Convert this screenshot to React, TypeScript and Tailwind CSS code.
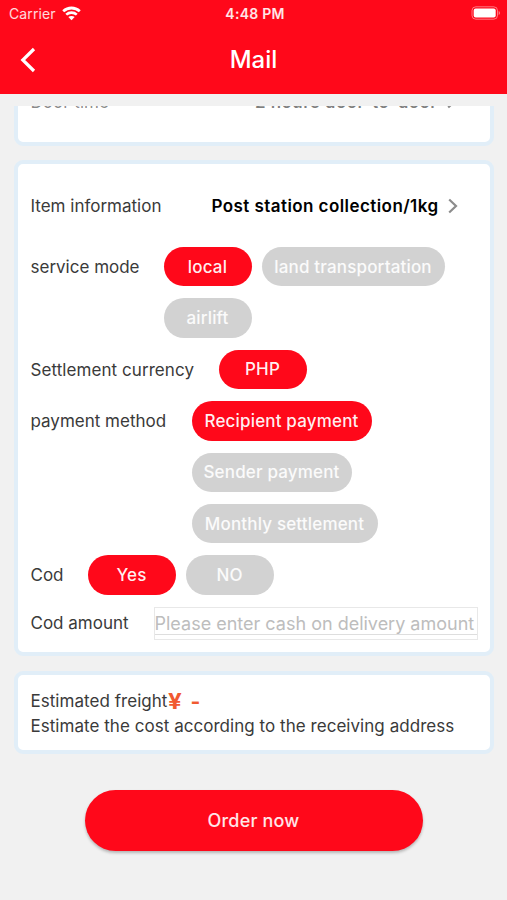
import type { ReactNode } from "react";
import clsx from "clsx";

function StatusBar() {
    return (
        <div className="grid h-[27px] grid-cols-3 items-center pl-[9px] pr-[6px] text-[14px] leading-none">
            <div className="flex items-center gap-[6px]">
                <span className="tracking-[0.1px] text-white/85">Carrier</span>
                <svg width="19" height="15" viewBox="0 0 19 15" fill="none" stroke="white" className="-mt-px">
                    <path d="M1.2 5.2C6 .9 13 .9 17.8 5.2" strokeWidth="2.8" />
                    <path d="M4.2 8.6c3-2.7 7.6-2.7 10.6 0" strokeWidth="2.6" />
                    <path d="M9.5 14.2 6.3 11.1c1.9-1.6 4.5-1.6 6.4 0z" fill="white" stroke="none" />
                </svg>
            </div>
            <span className="text-center font-semibold tracking-[0.25px] text-white/90">4:48 PM</span>
            <div className="-mt-px flex justify-end">
                <svg width="30" height="14" viewBox="0 0 30 14" fill="none">
                    <rect x="1" y="0.8" width="25.5" height="12.4" rx="3.8" stroke="white" strokeOpacity="0.45" />
                    <rect x="2.7" y="2.5" width="22" height="9" rx="2" fill="white" />
                    <path d="M27.7 5v4c1.7-.6 1.7-3.4 0-4z" fill="white" fillOpacity="0.5" />
                </svg>
            </div>
        </div>
    );
}

function Header() {
    return (
        <header className="h-[94px] bg-[#ff081a] text-white">
            <StatusBar />
            <div className="grid h-[66px] grid-cols-3 items-center px-5">
                <svg width="16" height="26" viewBox="0 0 16 26" fill="none" stroke="white" strokeWidth="3.2">
                    <path d="M14 2 2.8 13 14 24" />
                </svg>
                <h1 className="text-center text-[24px] font-medium leading-none">Mail</h1>
            </div>
        </header>
    );
}

function Card({ children, className }: { children: ReactNode; className?: string }) {
    return (
        <section className={clsx("mx-auto w-[480px] border-4 border-[#e1eef8] bg-white px-[13px] rounded-[9px]", className)}>
            {children}
        </section>
    );
}

function Chevron() {
    return (
        <svg width="10" height="16" viewBox="0 0 10 16" fill="none" stroke="#8c8c8c" strokeWidth="2.2">
            <path d="M1.2 1.5 8 8l-6.8 6.5" />
        </svg>
    );
}

function Label({ children, className }: { children: ReactNode; className?: string }) {
    return (
        <span className={clsx("flex h-[39.4px] shrink-0 items-center whitespace-nowrap pt-[2px] text-[17px]", className)}>
            {children}
        </span>
    );
}

function Pill({ children, active, className }: { children: ReactNode; active?: boolean; className?: string }) {
    return (
        <button
            className={clsx(
                "flex h-[39.4px] items-center justify-center whitespace-nowrap rounded-full pt-[1.5px] text-[17px] font-medium tracking-[0.17px]",
                active ? "bg-[#ff081a] text-white/95" : "bg-[#d2d2d2] text-white/90",
                className
            )}
        >
            {children}
        </button>
    );
}

export default function App() {
    return (
        <main className="h-[900px] w-[507px] overflow-hidden bg-[#f1f1f1] font-['Inter','Liberation_Sans',sans-serif] text-[#3a3a3a]">
            <Header />

            <div className="mt-3 h-[794px] overflow-hidden">
                <Card className="-mt-5 h-[60px]">
                    <div className="flex h-[21px] items-center justify-between pr-[20px] text-[17px] leading-none">
                        <span className="pt-[3px] text-[#3a3a3a]/60">Door time</span>
                        <div className="flex items-center gap-[9px]">
                            <span className="pt-[3px] font-semibold tracking-[0.43px] text-black/50">2 hours door-to-door</span>
                            <Chevron />
                        </div>
                    </div>
                </Card>

                <Card className="mt-[14px] flex h-[496px] flex-col gap-3 pb-3">
                    <div className="-mb-3 flex h-[83px] shrink-0 items-center justify-between pr-[19px] text-[17px]">
                        <span className="pt-[2px]">Item information</span>
                        <div className="flex items-center gap-[9px]">
                            <span className="pt-[2px] font-semibold tracking-[0.43px] text-black">Post station collection/1kg</span>
                            <Chevron />
                        </div>
                    </div>

                    <div className="flex">
                        <Label className="w-[133px]">service mode</Label>
                        <div className="flex flex-wrap gap-x-[10px] gap-y-3">
                            <Pill active className="w-[88px]">local</Pill>
                            <Pill className="w-[183px]">land transportation</Pill>
                            <Pill className="w-[88px]">airlift</Pill>
                        </div>
                    </div>

                    <div className="flex">
                        <Label className="w-[188px] tracking-[0.07px]">Settlement currency</Label>
                        <Pill active className="w-[88px]">PHP</Pill>
                    </div>

                    <div className="flex">
                        <Label className="w-[161px]">payment method</Label>
                        <div className="flex flex-col gap-3">
                            <Pill active className="w-[180px]">Recipient payment</Pill>
                            <Pill className="w-[160px]">Sender payment</Pill>
                            <Pill className="w-[186px]">Monthly settlement</Pill>
                        </div>
                    </div>

                    <div className="flex">
                        <Label className="w-[57px]">Cod</Label>
                        <div className="flex gap-[10px]">
                            <Pill active className="w-[88px]">Yes</Pill>
                            <Pill className="w-[88px]">NO</Pill>
                        </div>
                    </div>

                    <div className="flex h-[33px] items-center">
                        <Label className="w-[123px]">Cod amount</Label>
                        <div className="h-[33px] w-[324px] shrink-0 border border-[#e8e8e8] pb-1">
                            <input
                                className="block h-full w-full border-b border-[#dedede] pt-[6px] text-[18px] outline-none placeholder:text-[#bdbdbd]"
                                placeholder="Please enter cash on delivery amount"
                            />
                        </div>
                    </div>
                </Card>

                <Card className="mt-[15px] flex h-[83px] flex-col justify-center pt-[2px] text-[17px] leading-[25px] tracking-[0.04px]">
                    <div className="flex items-center">
                        <span>Estimated freight</span>
                        <span className="flex items-center gap-[9px] pl-[2px] pt-px text-[21px] font-bold text-[#f15a31]">
                            <span className="scale-x-[1.15]">¥</span>
                            <span>-</span>
                        </span>
                    </div>
                    <p className="whitespace-nowrap">Estimate the cost according to the receiving address</p>
                </Card>

                <button className="mx-auto mt-9 block h-[61px] w-[338px] rounded-full bg-[#ff081a] text-[18px] font-medium tracking-[0.2px] text-white/90 shadow-[0_2px_3px_rgba(0,0,0,0.25)]">
                    Order now
                </button>
            </div>
        </main>
    );
}
